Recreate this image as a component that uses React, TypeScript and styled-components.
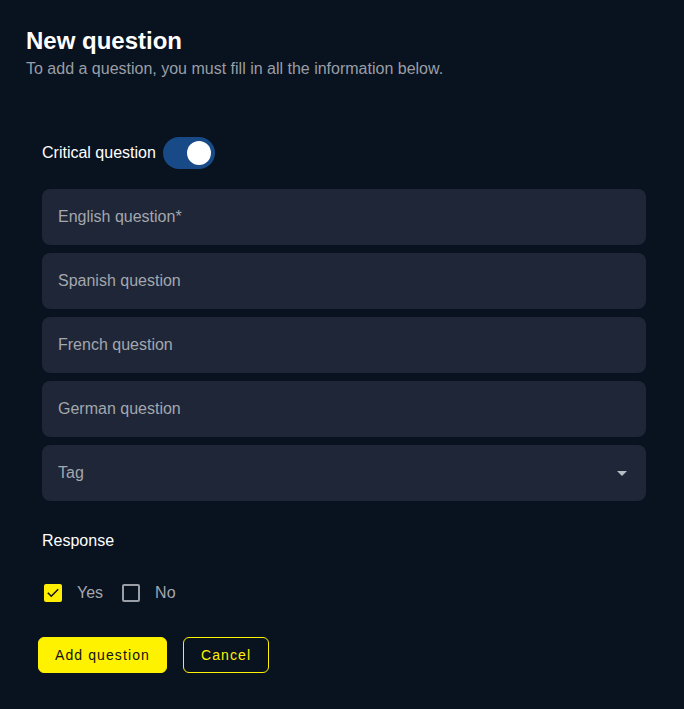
import React, { useState } from "react";
import styled, { createGlobalStyle } from "styled-components";

const Global = createGlobalStyle`
  html, body { margin: 0; padding: 0; background: #09121f; }
  body { font-family: "Liberation Sans", Arial, sans-serif; }
  * { box-sizing: border-box; }
`;

const Page = styled.div`
  width: 684px;
  height: 709px;
  background: #09121f;
  padding: 27px 38px 0 26px;
`;

const Title = styled.h1`
  margin: 0;
  font-size: 24px;
  font-weight: 700;
  color: #ffffff;
  line-height: 28px;
`;

const Subtitle = styled.p`
  margin: 5px 0 0;
  font-size: 16px;
  color: #9a9ea6;
  line-height: 18px;
`;

const Form = styled.div`
  display: flex;
  flex-direction: column;
  padding: 0 0 0 16px;
  margin-top: 59px;
`;

const ToggleRow = styled.div`
  display: flex;
  align-items: center;
  gap: 7px;
  height: 32px;
`;

const Label = styled.span`
  font-size: 16px;
  color: #ffffff;
`;

const Track = styled.button<{ $on: boolean }>`
  width: 52px;
  height: 32px;
  border-radius: 16px;
  border: none;
  background: ${(p) => (p.$on ? "#174a86" : "#3a4150")};
  padding: 4px;
  display: flex;
  justify-content: ${(p) => (p.$on ? "flex-end" : "flex-start")};
  cursor: pointer;
`;

const Knob = styled.span`
  width: 24px;
  height: 24px;
  border-radius: 50%;
  background: #ffffff;
`;

const Fields = styled.div`
  display: flex;
  flex-direction: column;
  gap: 8px;
  margin-top: 20px;
`;

const Field = styled.div`
  height: 56px;
  border-radius: 8px;
  background: #1e2637;
  display: flex;
  align-items: center;
  justify-content: space-between;
  padding: 0 16px;
  font-size: 16px;
  color: #a3a7ae;
`;

const Caret = styled.span`
  width: 0;
  height: 0;
  border-left: 5px solid transparent;
  border-right: 5px solid transparent;
  border-top: 5px solid #b8bcc3;
  margin-right: 3px;
`;

const SectionLabel = styled.div`
  font-size: 16px;
  color: #ffffff;
  margin-top: 31px;
  line-height: 18px;
`;

const Options = styled.div`
  display: flex;
  align-items: center;
  margin-top: 34px;
  margin-left: 2px;
  height: 18px;
`;

const Option = styled.label`
  display: flex;
  align-items: center;
  gap: 15px;
  font-size: 16px;
  color: #a3a7ae;
  margin-right: 19px;
  cursor: pointer;
`;

const Box = styled.span<{ $checked: boolean }>`
  width: 18px;
  height: 18px;
  border-radius: 2px;
  display: flex;
  align-items: center;
  justify-content: center;
  background: ${(p) => (p.$checked ? "#ffee00" : "transparent")};
  border: ${(p) => (p.$checked ? "none" : "2px solid #9a9ea6")};
`;

const Buttons = styled.div`
  display: flex;
  gap: 16px;
  margin-top: 35px;
  margin-left: -4px;
`;

const Primary = styled.button`
  height: 36px;
  padding: 0 16px;
  border-radius: 6px;
  border: 1px solid #fff200;
  background: #fff200;
  color: #111;
  font-family: "Liberation Sans", Arial, sans-serif;
  font-size: 14px;
  letter-spacing: 1.1px;
  cursor: pointer;
`;

const Secondary = styled(Primary)`
  background: transparent;
  color: #fff200;
  padding: 0 17px;
`;

export default function App() {
  const [critical, setCritical] = useState(true);
  const [yes, setYes] = useState(true);
  const [no, setNo] = useState(false);
  return (
    <>
      <Global />
      <Page>
        <Title>New question</Title>
        <Subtitle>To add a question, you must fill in all the information below.</Subtitle>
        <Form>
          <ToggleRow>
            <Label>Critical question</Label>
            <Track $on={critical} onClick={() => setCritical(!critical)}>
              <Knob />
            </Track>
          </ToggleRow>
          <Fields>
            <Field>English question*</Field>
            <Field>Spanish question</Field>
            <Field>French question</Field>
            <Field>German question</Field>
            <Field>
              Tag
              <Caret />
            </Field>
          </Fields>
          <SectionLabel>Response</SectionLabel>
          <Options>
            <Option onClick={() => setYes(!yes)}>
              <Box $checked={yes}>
                {yes && (
                  <svg width="14" height="14" viewBox="0 0 24 24" fill="none" stroke="#111" strokeWidth="2.6" strokeLinecap="square">
                    <path d="M4 12.5l5 5L20 6.5" />
                  </svg>
                )}
              </Box>
              Yes
            </Option>
            <Option onClick={() => setNo(!no)}>
              <Box $checked={no}>
                {no && (
                  <svg width="14" height="14" viewBox="0 0 24 24" fill="none" stroke="#111" strokeWidth="2.6" strokeLinecap="square">
                    <path d="M4 12.5l5 5L20 6.5" />
                  </svg>
                )}
              </Box>
              No
            </Option>
          </Options>
          <Buttons>
            <Primary>Add question</Primary>
            <Secondary>Cancel</Secondary>
          </Buttons>
        </Form>
      </Page>
    </>
  );
}
